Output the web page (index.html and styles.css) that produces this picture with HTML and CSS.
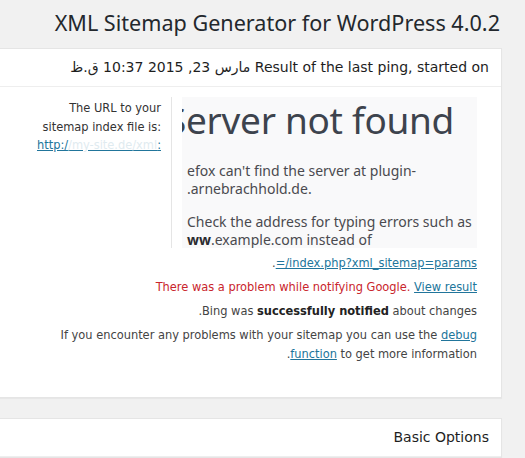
FILE: index.html
```html
<!DOCTYPE html>
<html lang="ar" dir="rtl">
<head>
  <meta charset="UTF-8">
  <meta name="viewport" content="width=device-width, initial-scale=1.0">
  <title>XML Sitemap Generator for WordPress</title>
  <link rel="stylesheet" href="styles.css">
</head>
<body>
  <div class="wrap">
    <h1 class="page-title">XML Sitemap Generator for WordPress 4.0.2</h1>

    <!-- Result of the last ping -->
    <div class="postbox">
      <h3 class="hndle">Result of the last ping, started on مارس 23, 2015 10:37 ق.ظ</h3>
      <div class="inside">
        <div class="sitemap-row">
          <div class="frame" dir="ltr">
            <div class="frame-page">
              <h2>Server not found</h2>
              <p>efox can't find the server at plugin-<br>.arnebrachhold.de.</p>
              <p>Check the address for typing errors such as<br><b>ww</b>.example.com instead of</p>
            </div>
          </div>
          <div class="url-label" dir="ltr">
            The URL to your sitemap index file is:
            <a href="#" class="sitemap-link">http:/<span class="faint">/my-site.de/xml</span>:</a>
          </div>
        </div>
        <p class="note"><a href="#" dir="ltr">=/index.php?xml_sitemap=params</a>.</p>
        <p class="note"><span class="error">There was a problem while notifying Google.</span> <a href="#">View result</a></p>
        <p class="note">Bing was <b>successfully notified</b> about changes.</p>
        <p class="note">If you encounter any problems with your sitemap you can use the <a href="#">debug function</a> to get more information.</p>
      </div>
    </div>

    <!-- Basic Options -->
    <div class="postbox">
      <h3 class="hndle">Basic Options</h3>
    </div>
  </div>
</body>
</html>
```

FILE: styles.css
```css
html, body {
  margin: 0;
  background-color: #f1f1f1;
  overflow: hidden;
}
body {
  font-family: "DejaVu Sans Condensed", "DejaVu Sans", sans-serif;
  font-size: 12.7px;
  color: #444;
}
a {
  color: #21759b;
}
.wrap {
  margin-right: 23px;
}
.page-title {
  margin: 0 2px 11px 0;
  padding-top: 8px;
  font-family: "Noto Sans", sans-serif;
  font-size: 21.6px;
  font-weight: normal;
  line-height: 29px;
  color: #23282d;
}
.postbox {
  margin-left: -30px;
  margin-bottom: 20px;
  background-color: #fff;
  border: 1px solid #e5e5e5;
  box-shadow: 0 1px 1px rgba(0, 0, 0, 0.04);
}
.hndle {
  margin: 0;
  padding: 10px 12px;
  font-family: "DejaVu Sans", sans-serif;
  font-size: 14px;
  font-weight: normal;
  line-height: 17px;
  color: #1e1e1e;
  border-bottom: 1px solid #eee;
}
.inside {
  padding: 10px 24px 29px 70px;
}
.sitemap-row {
  display: flex;
  align-items: stretch;
  margin-bottom: 5px;
}
.frame {
  flex: none;
  width: 295px;
  height: 151px;
  margin-left: 10px;
  overflow: hidden;
  background-color: #f9f9fa;
  text-align: left;
}
.frame-page {
  margin-left: -16px;
  font-family: "Noto Sans", sans-serif;
  color: #4a4a4f;
}
.frame-page h2 {
  margin: 0;
  padding: 1px 0 5px;
  font-size: 37px;
  font-weight: normal;
  line-height: 44px;
  letter-spacing: -0.3px;
  color: #3d434d;
}
.frame-page p {
  margin: 15px 0 0 21px;
  font-size: 14px;
  line-height: 18px;
}
.frame-page b {
  color: #2b2b2f;
}
.url-label {
  width: 136px;
  padding: 2px 10px 0 0;
  border-right: 1px solid #e5e5e5;
  text-align: right;
  line-height: 18.5px;
  color: #333;
}
.sitemap-link {
  white-space: nowrap;
}
.faint {
  color: #dfebf0;
}
.note {
  margin: 0 0 5px;
  line-height: 19px;
}
.note b {
  color: #222;
}
.error {
  color: #c9252c;
}
```
